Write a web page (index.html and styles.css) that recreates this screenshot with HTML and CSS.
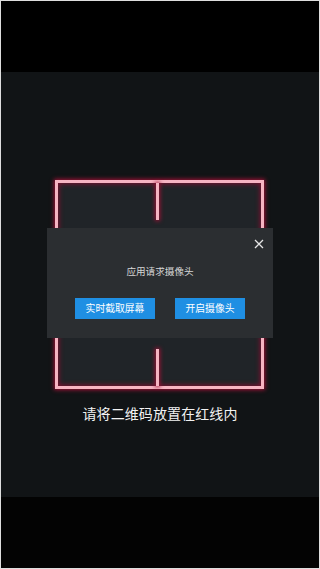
FILE: index.html
```html
<!DOCTYPE html>
<html lang="zh-CN">
<head>
<meta charset="utf-8">
<title>扫码</title>
<link rel="stylesheet" href="styles.css">
</head>
<body>
<div class="screen">
  <div class="bar-top"></div>
  <div class="camera">
    <div class="frame">
      <div class="seg"></div>
      <div class="seg"></div>
    </div>
    <p class="hint">请将二维码放置在红线内</p>
  </div>
  <div class="bar-bottom"></div>

  <div class="dialog">
    <button class="close" aria-label="关闭">
      <svg width="10" height="10" viewBox="0 0 10 10"><path d="M1 1L9 9M9 1L1 9" stroke="#e6e6e6" stroke-width="1.3" fill="none"/></svg>
    </button>
    <p class="title">应用请求摄像头</p>
    <div class="actions">
      <button class="btn btn-wide">实时截取屏幕</button>
      <button class="btn">开启摄像头</button>
    </div>
  </div>
</div>
</body>
</html>
```

FILE: styles.css
```css
* { box-sizing: border-box; }
html, body { margin: 0; padding: 0; background: #000; }
body { font-family: "Noto Sans CJK SC", "Noto Sans", sans-serif; }

.screen {
  position: relative;
  width: 320px;
  height: 569px;
  border: 1px solid #dedede;
  background: #020202;
  display: flex;
  flex-direction: column;
  overflow: hidden;
}
.bar-top { height: 71px; background: #000; }
.camera {
  height: 425px;
  background: #111416;
  display: flex;
  flex-direction: column;
  align-items: center;
  padding-top: 108px;
}
.bar-bottom { flex: 1; background: #030303; }

.frame {
  width: 209px;
  height: 209px;
  margin-right: 1px;
  border: 3px solid #f6b4c2;
  background: #202428;
  box-shadow: 0 0 4px 1px #a01236, inset 0 0 5px 1px #7e1030;
  display: flex;
  flex-direction: column;
  justify-content: space-between;
  align-items: center;
}
.seg {
  width: 3px;
  height: 37px;
  margin-right: 4px;
  background: #f6b4c2;
  box-shadow: 0 0 4px 1px #a01236;
}
.hint {
  margin: 15px 0 0;
  color: #f2f2f2;
  font-size: 14px;
  line-height: 18px;
  letter-spacing: 0.1px;
}

.dialog {
  position: absolute;
  left: 46px;
  top: 227px;
  width: 226px;
  height: 110px;
  background: #2b2e31;
  display: flex;
  flex-direction: column;
  align-items: center;
}
.close {
  position: absolute;
  right: 9px;
  top: 11px;
  width: 10px;
  height: 10px;
  padding: 0;
  border: 0;
  background: none;
  display: flex;
}
.title {
  margin: 36px 0 0;
  color: #d6d6d6;
  font-size: 9.6px;
  line-height: 14px;
}
.actions {
  display: flex;
  gap: 20px;
  margin-top: 20px;
}
.btn {
  width: 70px;
  height: 21px;
  padding: 0;
  border: 0;
  background: #1f8fe3;
  color: #fff;
  font-family: inherit;
  font-size: 9.8px;
  line-height: 21px;
}
.btn-wide { width: 80px; }
```
